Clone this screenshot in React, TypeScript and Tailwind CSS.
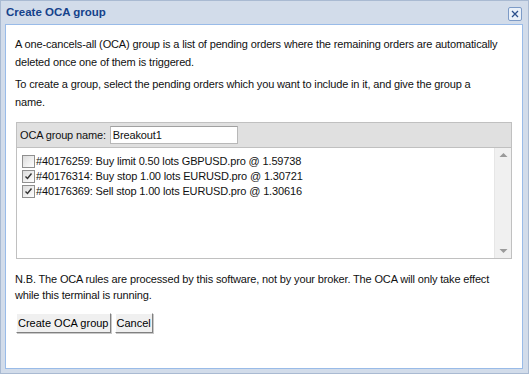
import React from "react";

const orders = [
  { id: "#40176259: Buy limit 0.50 lots GBPUSD.pro @ 1.59738", checked: false },
  { id: "#40176314: Buy stop 1.00 lots EURUSD.pro @ 1.30721", checked: true },
  { id: "#40176369: Sell stop 1.00 lots EURUSD.pro @ 1.30616", checked: true },
];

function Check({ checked }: { checked: boolean }) {
  return (
    <span className="w-[13px] h-[13px] border border-[#8f8f8f] bg-gradient-to-br from-[#dcdcdc] to-white flex items-center justify-center shrink-0">
      {checked && (
        <svg width="9" height="9" viewBox="0 0 9 9">
          <path d="M1.5 4.5 L3.5 6.5 L7.5 1.5" stroke="#333" strokeWidth="1.4" fill="none" />
        </svg>
      )}
    </span>
  );
}

export default function App() {
  return (
    <div
      className="w-[529px] h-[374px] bg-[#d2dcea] border border-[#a9bad2] flex flex-col"
      style={{ fontFamily: "Tahoma, 'Liberation Sans', Arial, sans-serif" }}
    >
      <div className="h-[23px] flex items-center justify-between pl-[5px] pr-[6px]">
        <span className="text-[11.5px] font-bold text-[#15428b] leading-none mt-[1px]">Create OCA group</span>
        <span className="w-[14px] h-[14px] border border-[#7d9bc7] rounded-[2px] bg-[#e9f0f9] flex items-center justify-center mt-[2px]">
          <svg width="10" height="10" viewBox="0 0 10 10">
            <path d="M2 2 L8 8 M8 2 L2 8" stroke="#2a4f8c" strokeWidth="1.3" />
          </svg>
        </span>
      </div>
      <div className="flex-1 ml-[4px] mr-[5px] mb-[4px] bg-white border border-[#99bbe8] pl-[9px] pr-[10px] pt-[10px] text-[11px] tracking-[-0.15px] text-[#111] leading-[18px]">
        <p className="w-[485px]">
          A one-cancels-all (OCA) group is a list of pending orders where the remaining orders are automatically deleted once one of them is triggered.
        </p>
        <p className="mt-[4px] w-[485px]">
          To create a group, select the pending orders which you want to include in it, and give the group a name.
        </p>
        <div className="mt-[11px] ml-[1px] border border-[#c0c0c0]">
          <div className="h-[25px] bg-[#e0e0e0] border-b border-[#c0c0c0] flex items-center pl-[3px] gap-[4px]">
            <span className="leading-none">OCA group name:</span>
            <span className="w-[128px] h-[18px] bg-white border border-[#b8b8b8] border-t-[#a0a0a0] flex items-center pl-[2px] leading-none">
              Breakout1
            </span>
          </div>
          <div className="h-[110px] flex">
            <div className="flex-1 pl-[5px] pt-[6px] flex flex-col">
              {orders.map((o) => (
                <div key={o.id} className="h-[15px] flex items-center gap-[1px]">
                  <Check checked={o.checked} />
                  <span className="leading-none">{o.id}</span>
                </div>
              ))}
            </div>
            <div className="w-[17px] bg-[#f0f0f0] border-l border-[#e6e6e6] flex flex-col items-center justify-between py-[4px]">
              <svg width="9" height="5" viewBox="0 0 9 5">
                <path d="M0.5 5 L4.5 1 L8.5 5 Z" fill="#9a9a9a" />
              </svg>
              <svg width="9" height="5" viewBox="0 0 9 5">
                <path d="M0.5 0 L4.5 4 L8.5 0 Z" fill="#9a9a9a" />
              </svg>
            </div>
          </div>
        </div>
        <p className="mt-[12px] leading-[16px]">
          N.B. The OCA rules are processed by this software, not by your broker. The OCA will only take effect while this terminal is running.
        </p>
        <div className="mt-[10px] ml-[1px] flex gap-[4px] tracking-normal" style={{ fontFamily: "'Liberation Sans', Arial, sans-serif" }}>
          <button className="h-[20px] px-[1px] bg-[#f0f0f0] border border-t-white border-l-white border-r-[#808080] border-b-[#808080] shadow-[1px_1px_0_#c8c8c8] text-[11px] leading-none text-black">
            Create OCA group
          </button>
          <button className="h-[20px] px-[1px] bg-[#f0f0f0] border border-t-white border-l-white border-r-[#808080] border-b-[#808080] shadow-[1px_1px_0_#c8c8c8] text-[11px] leading-none text-black">
            Cancel
          </button>
        </div>
      </div>
    </div>
  );
}
